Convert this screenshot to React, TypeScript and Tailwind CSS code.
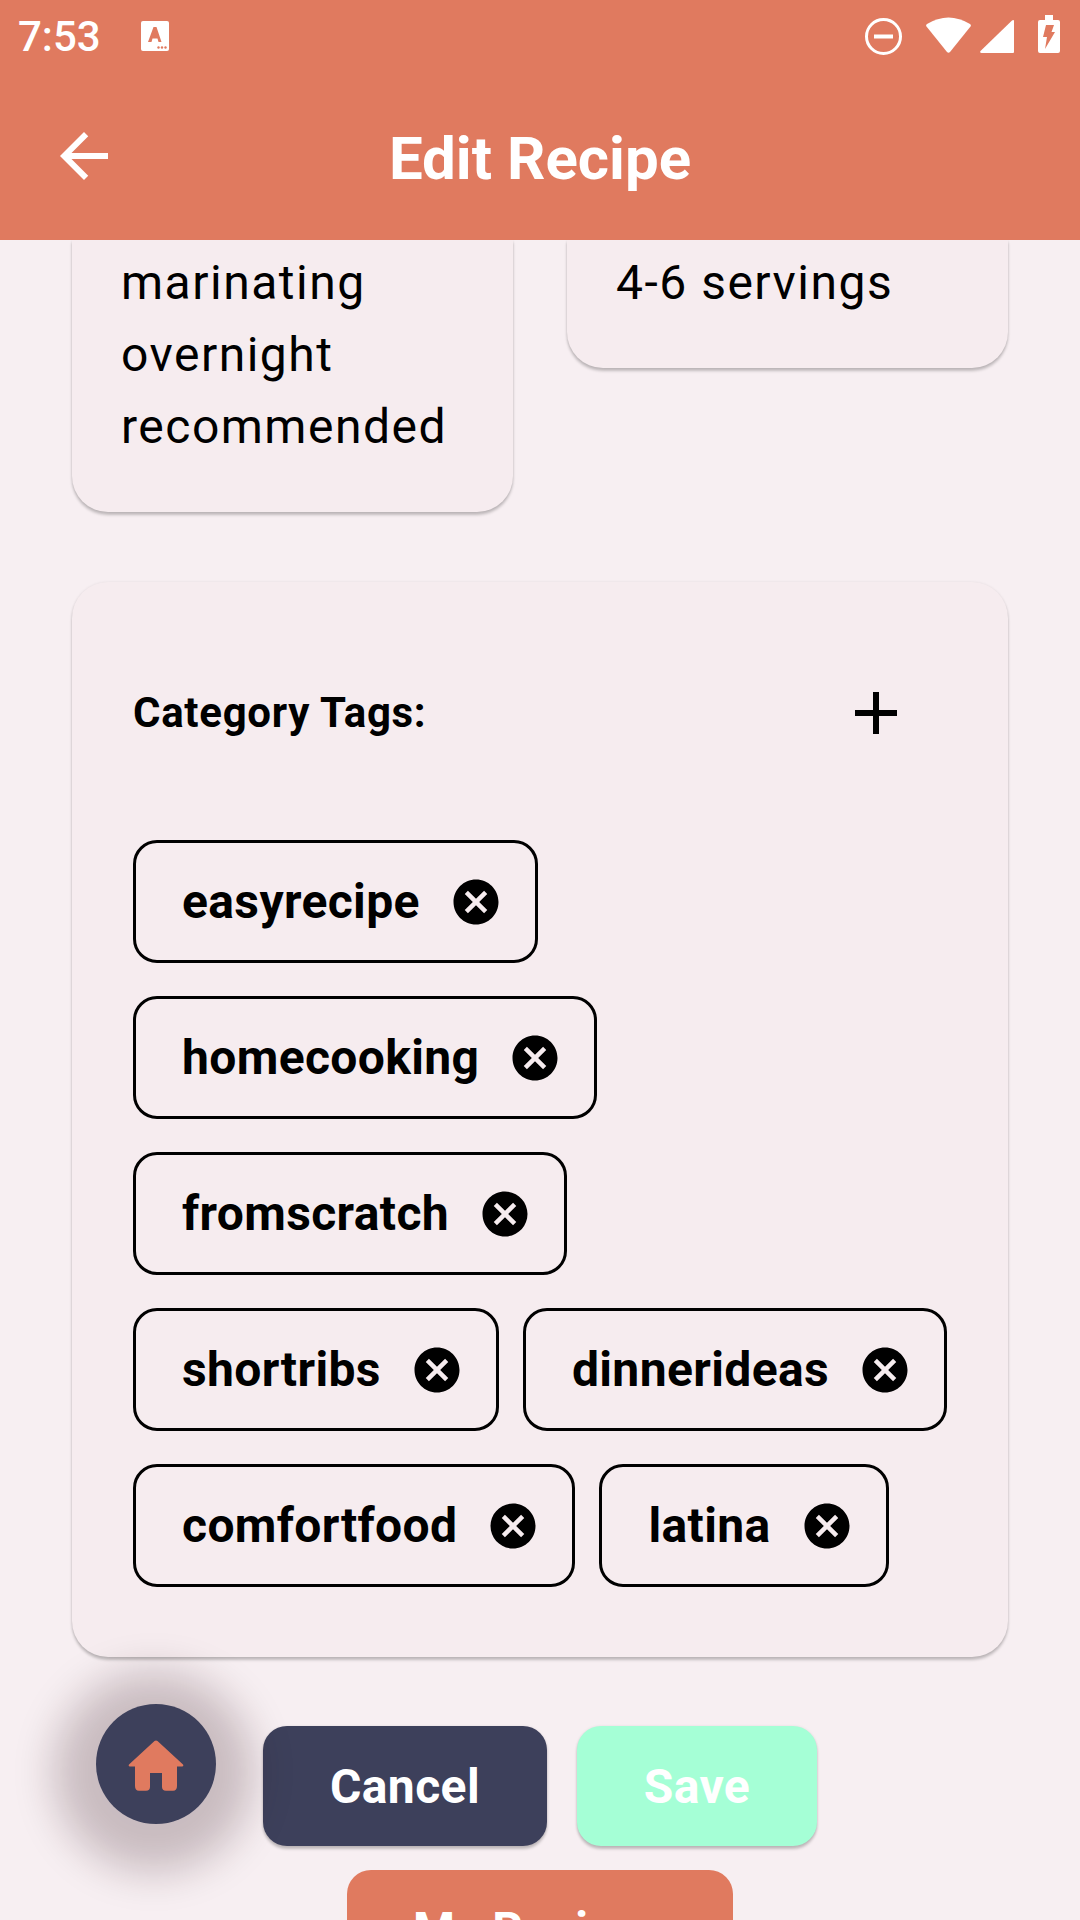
const rows = [
  ["easyrecipe"],
  ["homecooking"],
  ["fromscratch"],
  ["shortribs", "dinnerideas"],
  ["comfortfood", "latina"],
];

const cardShadow = "shadow-[0_3px_3px_rgba(0,0,0,0.22),0_0_3px_rgba(0,0,0,0.08)]";

function StatusBar() {
  return (
    <div className="flex h-[72px] items-center justify-between pl-[18px] pr-[20px] text-white">
      <div className="flex items-center">
        <span className="mt-[2px] w-[123px] text-[42px] font-medium leading-none">7:53</span>
        <svg width="28" height="30" viewBox="0 0 28 30">
          <rect width="28" height="30" rx="2" fill="#fff" />
          <path d="M7 21 L12.500 6 H15.500 L20.500 21 H17.500 L16.500 17.500 H11.500 L10.500 21 Z" fill="#E07A5F" />
          <circle cx="17.500" cy="26.500" r="1.200" fill="#E07A5F" />
          <circle cx="21" cy="26.500" r="1.200" fill="#E07A5F" />
          <circle cx="24.500" cy="26.500" r="1.200" fill="#E07A5F" />
        </svg>
      </div>
      <div className="flex items-center">
        <svg width="37" height="37" viewBox="0 0 37 37" className="mr-[24px]">
          <circle cx="18.500" cy="18.500" r="17" fill="none" stroke="#fff" strokeWidth="3" />
          <rect x="9" y="16.500" width="19" height="4" fill="#fff" />
        </svg>
        <svg width="45" height="36" viewBox="0 0 45 36" className="mr-[9px] mt-[-2px]">
          <path d="M1 7 Q22.500 -6 44 7 Q45.500 8 44.500 9.500 L24 35 Q22.500 36.500 21 35 L0.500 9.500 Q-0.500 8 1 7 Z" fill="#fff" />
        </svg>
        <svg width="34" height="33" viewBox="0 0 34 33" className="mr-[24px]">
          <path d="M34 1 V32 Q34 33 33 33 H1.500 Q-0.500 33 0.500 31 L32 0.500 Q34 -0.500 34 1 Z" fill="#fff" />
        </svg>
        <svg width="22" height="38" viewBox="0 0 22 38" className="mt-[-4px]">
          <path d="M7 0 H15 V5 H20 Q22 5 22 7 V36 Q22 38 20 38 H2 Q0 38 0 36 V7 Q0 5 2 5 H7 Z" fill="#fff" />
          <path d="M8 10 H16 L13.500 17 H17 L7 34 L9 22 H5 Z" fill="#E07A5F" />
        </svg>
      </div>
    </div>
  );
}

function Header() {
  return (
    <header className="relative z-10 h-[240px] shrink-0 bg-[#E07A5F]">
      <StatusBar />
      <div className="relative flex h-[168px] items-center justify-center">
        <svg width="72" height="72" viewBox="0 0 24 24" className="absolute left-[48px] top-[48px]">
          <path d="M20 11H7.830l5.590-5.590L12 4l-8 8 8 8 1.410-1.410L7.830 13H20v-2z" fill="#fff" />
        </svg>
        <h1 className="mt-[5px] text-[60px] font-bold leading-none text-white">Edit Recipe</h1>
      </div>
    </header>
  );
}

function Chip({ label }: { label: string }) {
  return (
    <div className="flex h-[123px] items-center rounded-[24px] border-[3px] border-black pl-[46px] pr-[32px]">
      <span className="mr-[29px] text-[48px] font-bold leading-none tracking-[0.370px] text-black">{label}</span>
      <svg width="54" height="54" viewBox="0 0 24 24">
        <path
          fillRule="evenodd"
          d="M12 2C6.470 2 2 6.470 2 12s4.470 10 10 10 10-4.470 10-10S17.530 2 12 2zm5 13.590L15.590 17 12 13.410 8.410 17 7 15.590 10.590 12 7 8.410 8.410 7 12 10.590 15.590 7 17 8.410 13.410 12 17 15.590z"
          fill="#000"
        />
      </svg>
    </div>
  );
}

export default function App() {
  return (
    <div className="relative flex h-[1920px] w-[1080px] flex-col overflow-hidden bg-[#F7EFF2] font-['Roboto',sans-serif]">
      <Header />
      <main className="flex flex-col">
        <div className="flex items-start justify-between px-[72px]">
          <div className={`h-[272px] w-[441px] rounded-b-[36px] bg-[#F6ECEF] pl-[49px] pt-[7px] text-[48px] leading-[72px] tracking-[1.500px] text-black ${cardShadow}`}>
            marinating
            <br />
            overnight
            <br />
            recommended
          </div>
          <div className={`h-[128px] w-[441px] rounded-b-[36px] bg-[#F6ECEF] pl-[49px] pt-[7px] text-[48px] leading-[72px] tracking-[1.500px] text-black ${cardShadow}`}>
            4-6 servings
          </div>
        </div>

        <section className={`mx-[72px] mt-[70px] h-[1075px] rounded-[36px] bg-[#F6ECEF] px-[61px] pt-[95px] ${cardShadow}`}>
          <div className="flex h-[72px] items-center justify-between pr-[35px]">
            <h2 className="text-[42px] font-bold leading-none tracking-[0.700px] text-black">Category Tags:</h2>
            <svg width="72" height="72" viewBox="0 0 24 24">
              <path d="M19 13h-6v6h-2v-6H5v-2h6V5h2v6h6v2z" fill="#000" />
            </svg>
          </div>
          <div className="mt-[91px] flex flex-col gap-[33px]">
            {rows.map((row) => (
              <div key={row[0]} className="flex gap-[24px]">
                {row.map((tag) => (
                  <Chip key={tag} label={tag} />
                ))}
              </div>
            ))}
          </div>
        </section>

        <div className="mt-[69px] flex gap-[30px] pl-[263px]">
          <button type="button" className={`flex h-[120px] w-[284px] items-center justify-center rounded-[24px] bg-[#3D405B] pt-[2px] text-[48px] font-bold tracking-[0.400px] text-white ${cardShadow}`}>
            Cancel
          </button>
          <button type="button" className={`flex h-[120px] w-[240px] items-center justify-center rounded-[24px] bg-[#A5FFD6] pt-[2px] text-[48px] font-bold tracking-[0.400px] text-white ${cardShadow}`}>
            Save
          </button>
        </div>
        <div className="mt-[24px] flex justify-center">
          <button type="button" className="flex h-[120px] w-[386px] shrink-0 items-center justify-center rounded-[24px] bg-[#E07A5F] text-[48px] font-bold tracking-[0.400px] text-white">
            My Recipes
          </button>
        </div>
      </main>

      <button type="button" className="absolute left-[96px] top-[1704px] flex size-[120px] items-center justify-center rounded-full bg-[#3D405B] shadow-[-2px_8px_40px_40px_rgba(40,10,20,0.22)]">
        <svg width="72" height="72" viewBox="0 0 72 72">
          <path d="M37.500 13 L63 36.500 Q64 38.500 62 38.500 H57 V58 Q57 62.700 53 62.700 H46 Q42 62.700 42 59 V45 H30 V59 Q30 62.700 26 62.700 H19 Q15 62.700 15 58 V38.500 H10 Q8 38.500 9 36.500 L34.500 13 Q36 11.800 37.500 13 Z" fill="#E07A5F" />
        </svg>
      </button>
    </div>
  );
}
